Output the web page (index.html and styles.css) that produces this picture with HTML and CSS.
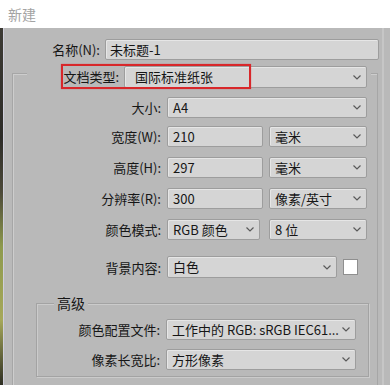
FILE: index.html
```html
<!DOCTYPE html>
<html lang="zh">
<head>
<meta charset="utf-8">
<link rel="stylesheet" href="styles.css">
</head>
<body>
<div class="window">
  <div class="titlebar">新建</div>
  <div class="main">
    <div class="edge"></div>
    <div class="dialog">
      <div class="name-row">
        <span class="label name-label">名称(N):</span>
        <div class="field name-field">未标题-1</div>
      </div>
      <div class="group">
        <div class="legend-row">
          <span class="legend-label">文档类型:</span>
          <div class="field select doc-select">国际标准纸张<svg class="chev" width="8" height="5" viewBox="0 0 8 5"><polyline points="0.5,0.5 4,4 7.5,0.5" fill="none" stroke="#5a5a5a" stroke-width="1.2"/></svg></div>
          <div class="highlight"></div>
        </div>
        <div class="row r-size">
          <span class="label">大小:</span>
          <div class="field select w200">A4<svg class="chev" width="8" height="5" viewBox="0 0 8 5"><polyline points="0.5,0.5 4,4 7.5,0.5" fill="none" stroke="#5a5a5a" stroke-width="1.2"/></svg></div>
        </div>
        <div class="row r-w">
          <span class="label">宽度(W):</span>
          <div class="field w96">210</div>
          <div class="field select w98">毫米<svg class="chev" width="8" height="5" viewBox="0 0 8 5"><polyline points="0.5,0.5 4,4 7.5,0.5" fill="none" stroke="#5a5a5a" stroke-width="1.2"/></svg></div>
        </div>
        <div class="row r-h">
          <span class="label">高度(H):</span>
          <div class="field w96">297</div>
          <div class="field select w98">毫米<svg class="chev" width="8" height="5" viewBox="0 0 8 5"><polyline points="0.5,0.5 4,4 7.5,0.5" fill="none" stroke="#5a5a5a" stroke-width="1.2"/></svg></div>
        </div>
        <div class="row r-r">
          <span class="label">分辨率(R):</span>
          <div class="field w96">300</div>
          <div class="field select w98">像素/英寸<svg class="chev" width="8" height="5" viewBox="0 0 8 5"><polyline points="0.5,0.5 4,4 7.5,0.5" fill="none" stroke="#5a5a5a" stroke-width="1.2"/></svg></div>
        </div>
        <div class="row r-m">
          <span class="label">颜色模式:</span>
          <div class="field select w93">RGB 颜色<svg class="chev" width="8" height="5" viewBox="0 0 8 5"><polyline points="0.5,0.5 4,4 7.5,0.5" fill="none" stroke="#5a5a5a" stroke-width="1.2"/></svg></div>
          <div class="field select w98 gap9">8 位<svg class="chev" width="8" height="5" viewBox="0 0 8 5"><polyline points="0.5,0.5 4,4 7.5,0.5" fill="none" stroke="#5a5a5a" stroke-width="1.2"/></svg></div>
        </div>
        <div class="row r-bg">
          <span class="label">背景内容:</span>
          <div class="field select w170 h22">白色<svg class="chev" width="8" height="5" viewBox="0 0 8 5"><polyline points="0.5,0.5 4,4 7.5,0.5" fill="none" stroke="#5a5a5a" stroke-width="1.2"/></svg></div>
          <div class="swatch"></div>
        </div>
        <div class="adv">
          <div class="adv-legend">高级</div>
          <div class="row r-p">
            <span class="label adv-label">颜色配置文件:</span>
            <div class="field select w190">工作中的 RGB: sRGB IEC61...<svg class="chev" width="8" height="5" viewBox="0 0 8 5"><polyline points="0.5,0.5 4,4 7.5,0.5" fill="none" stroke="#5a5a5a" stroke-width="1.2"/></svg></div>
          </div>
          <div class="row r-a">
            <span class="label adv-label">像素长宽比:</span>
            <div class="field select w190">方形像素<svg class="chev" width="8" height="5" viewBox="0 0 8 5"><polyline points="0.5,0.5 4,4 7.5,0.5" fill="none" stroke="#5a5a5a" stroke-width="1.2"/></svg></div>
          </div>
        </div>
      </div>
    </div>
  </div>
</div>
</body>
</html>
```
FILE: styles.css
```css
* { box-sizing: border-box; }
html, body {
  margin: 0;
  padding: 0;
  width: 390px;
  height: 385px;
  overflow: hidden;
  background: #b9b9b9;
}
.window {
  width: 390px;
  height: 385px;
  display: flex;
  flex-direction: column;
  font-family: "Noto Sans CJK SC", "Noto Sans", sans-serif;
  font-size: 13px;
  color: #161616;
}
.titlebar {
  height: 28px;
  flex: none;
  background: #ffffff;
  color: #a3a3a3;
  font-size: 14px;
  line-height: 28px;
  padding-left: 8px;
}
.main {
  flex: 1;
  display: flex;
  background: #b9b9b9;
}
.edge {
  width: 4px;
  flex: none;
  background: linear-gradient(to bottom, #3d3b34 0%, #2d2c28 30%, #4d4a3a 45%, #8e9a4e 60%, #a6a85a 80%, #1f1f1c 100%);
  border-right: 1px solid #cfcfdc;
}
.dialog {
  flex: 1;
  padding-top: 11px;
  border-right: 2px solid #c6c6c6;
  margin-right: 6px;
}
.name-row {
  display: flex;
  align-items: center;
  height: 21px;
}
.label {
  text-align: right;
  white-space: nowrap;
  line-height: 21px;
}
.name-label {
  width: 98px;
  padding-right: 1px;
  margin-left: -1px;
}
.field {
  height: 21px;
  background: #d5d5d5;
  border: 1px solid #9d9d9d;
  box-shadow: inset 1px 1px 0 #e6e6e6;
  border-radius: 2px;
  line-height: 19px;
  padding-left: 5px;
  white-space: nowrap;
  overflow: hidden;
  flex: none;
}
.name-field {
  width: 274px;
  margin-left: 4px;
  padding-left: 4px;
}
.select {
  display: flex;
  align-items: center;
  justify-content: space-between;
  padding-right: 5px;
}
.chev { flex: none; }
.group {
  margin-top: 13px;
  margin-left: 8px;
  width: 366px;
  height: 320px;
  border: 1px solid #a6a6a6;
  box-shadow: inset 1px 1px 0 #cdcdcd;
  border-bottom: none;
}
.legend-row {
  position: relative;
  display: flex;
  align-items: center;
  height: 22px;
  margin-top: -8px;
  margin-left: 14px;
  width: 344px;
  background: #b9b9b9;
}
.legend-label {
  width: 97px;
  text-align: right;
  padding-right: 5px;
  line-height: 22px;
}
.doc-select {
  width: 243px;
  height: 22px;
  line-height: 20px;
  padding-left: 10px;
}
.highlight {
  position: absolute;
  left: 34px;
  top: -2px;
  width: 190px;
  height: 25px;
  border: 2px solid #d8272a;
  box-shadow: 0 0 1px rgba(216, 39, 42, 0.6);
  pointer-events: none;
}
.row {
  display: flex;
  align-items: center;
}
.row .label {
  width: 154px;
  padding-right: 6px;
  flex: none;
}
.row .field + .field { margin-left: 6px; }
.row .field.gap9 { margin-left: 9px; }
.r-size { margin-top: 9px; }
.r-w { margin-top: 8px; }
.r-h { margin-top: 10px; }
.r-r { margin-top: 10px; }
.r-m { margin-top: 10px; }
.r-bg { margin-top: 16px; }
.w200 { width: 200px; }
.w96 { width: 96px; }
.w98 { width: 98px; }
.w93 { width: 93px; }
.w170 { width: 170px; }
.w190 { width: 190px; }
.h22 { height: 22px; line-height: 20px; }
.swatch {
  width: 15px;
  height: 16px;
  margin-left: 6px;
  background: #ffffff;
  border: 1px solid #8f8f8f;
}
.adv {
  margin-top: 25px;
  margin-left: 23px;
  width: 333px;
  height: 74px;
  border: 1px solid #a3a3a3;
  box-shadow: inset 1px 1px 0 #cbcbcb, 1px 1px 0 #cbcbcb;
  padding-bottom: 5px;
}
.adv-legend {
  margin-top: -10px;
  margin-left: 17px;
  padding: 0 3px;
  width: max-content;
  height: 18px;
  line-height: 18px;
  background: #b9b9b9;
  font-size: 14px;
}
.row .adv-label {
  width: 129px;
  padding-right: 6px;
}
.r-p { margin-top: 7px; }
.r-a { margin-top: 9px; }
```
